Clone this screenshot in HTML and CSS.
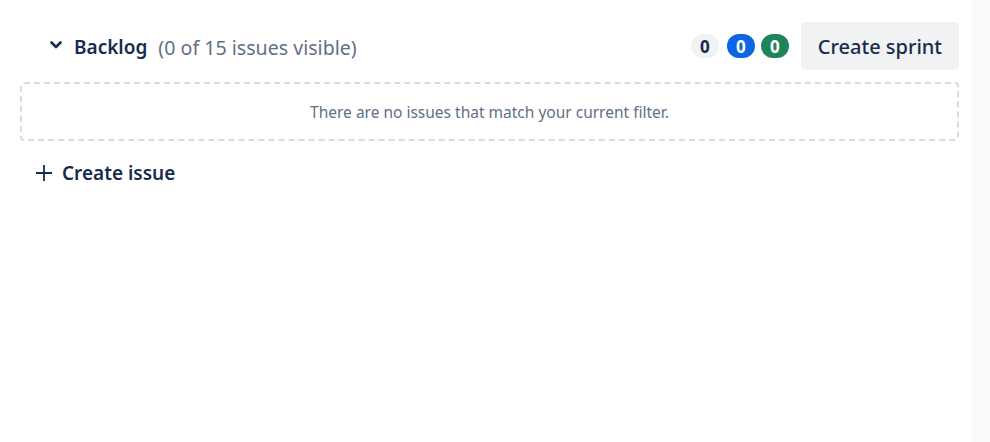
FILE: index.html
```html
<!DOCTYPE html>
<html>
<head>
<meta charset="utf-8">
<link rel="stylesheet" href="styles.css">
</head>
<body>
<div class="page">
  <main class="main">
    <div class="header">
      <div class="title">
        <svg class="chev" width="12" height="8" viewBox="0 0 12 8"><path d="M1.5 1.5 L6 6 L10.5 1.5" fill="none" stroke="#172b4d" stroke-width="2.6" stroke-linecap="round" stroke-linejoin="round"/></svg>
        <span class="name">Backlog</span>
        <span class="count">(0 of 15 issues visible)</span>
      </div>
      <div class="actions">
        <span class="badge gray">0</span>
        <span class="badge blue">0</span>
        <span class="badge green">0</span>
        <button class="btn">Create sprint</button>
      </div>
    </div>
    <div class="empty">There are no issues that match your current filter.</div>
    <div class="create">
      <svg width="18" height="18" viewBox="0 0 18 18"><path d="M9 1 V17 M1 9 H17" stroke="#172b4d" stroke-width="1.8"/></svg>
      <span>Create issue</span>
    </div>
  </main>
  <aside class="side"></aside>
</div>
</body>
</html>
```

FILE: styles.css
```css
html, body { margin: 0; padding: 0; background: #fff; }
body { font-family: "Noto Sans", "Open Sans", sans-serif; color: #172b4d; }
.page { display: flex; width: 990px; height: 442px; }
.main { flex: 0 0 972px; box-sizing: border-box; padding: 22px 13px 0 20px; }
.side { flex: 1; background: #fafafa; }
.header { display: flex; align-items: center; justify-content: space-between; height: 48px; }
.title { display: flex; align-items: center; padding-left: 30px; padding-top: 2px; }
.chev { margin-right: 12px; margin-top: -4px; }
.name { font-size: 19px; font-weight: 600; color: #172b4d; }
.count { font-size: 19.6px; color: #626f86; margin-left: 11px; }
.actions { display: flex; align-items: center; gap: 6px; }
.badge { display: inline-flex; align-items: center; justify-content: center; min-width: 28px; height: 24px; border-radius: 12px; font-size: 17px; font-weight: 700; box-sizing: border-box; }
.badge.gray { background: #f1f2f4; color: #172b4d; }
.badge.blue { background: #0c66e4; color: #fff; margin-left: 2px; }
.badge.green { background: #1f845a; color: #fff; }
.btn { margin-left: 6px; height: 48px; padding: 0 17px; border: none; border-radius: 4px; background: #f1f2f4; color: #172b4d; font-family: inherit; font-size: 20px; font-weight: 500; }
.empty { margin-top: 12px; height: 59px; box-sizing: border-box; border: 2px dashed #d8dbe0; border-radius: 4px; display: flex; align-items: center; justify-content: center; font-size: 15.5px; color: #626f86; }
.create { display: flex; align-items: center; gap: 9px; margin-top: 19px; padding-left: 15px; font-size: 19px; font-weight: 600; color: #172b4d; }
```
